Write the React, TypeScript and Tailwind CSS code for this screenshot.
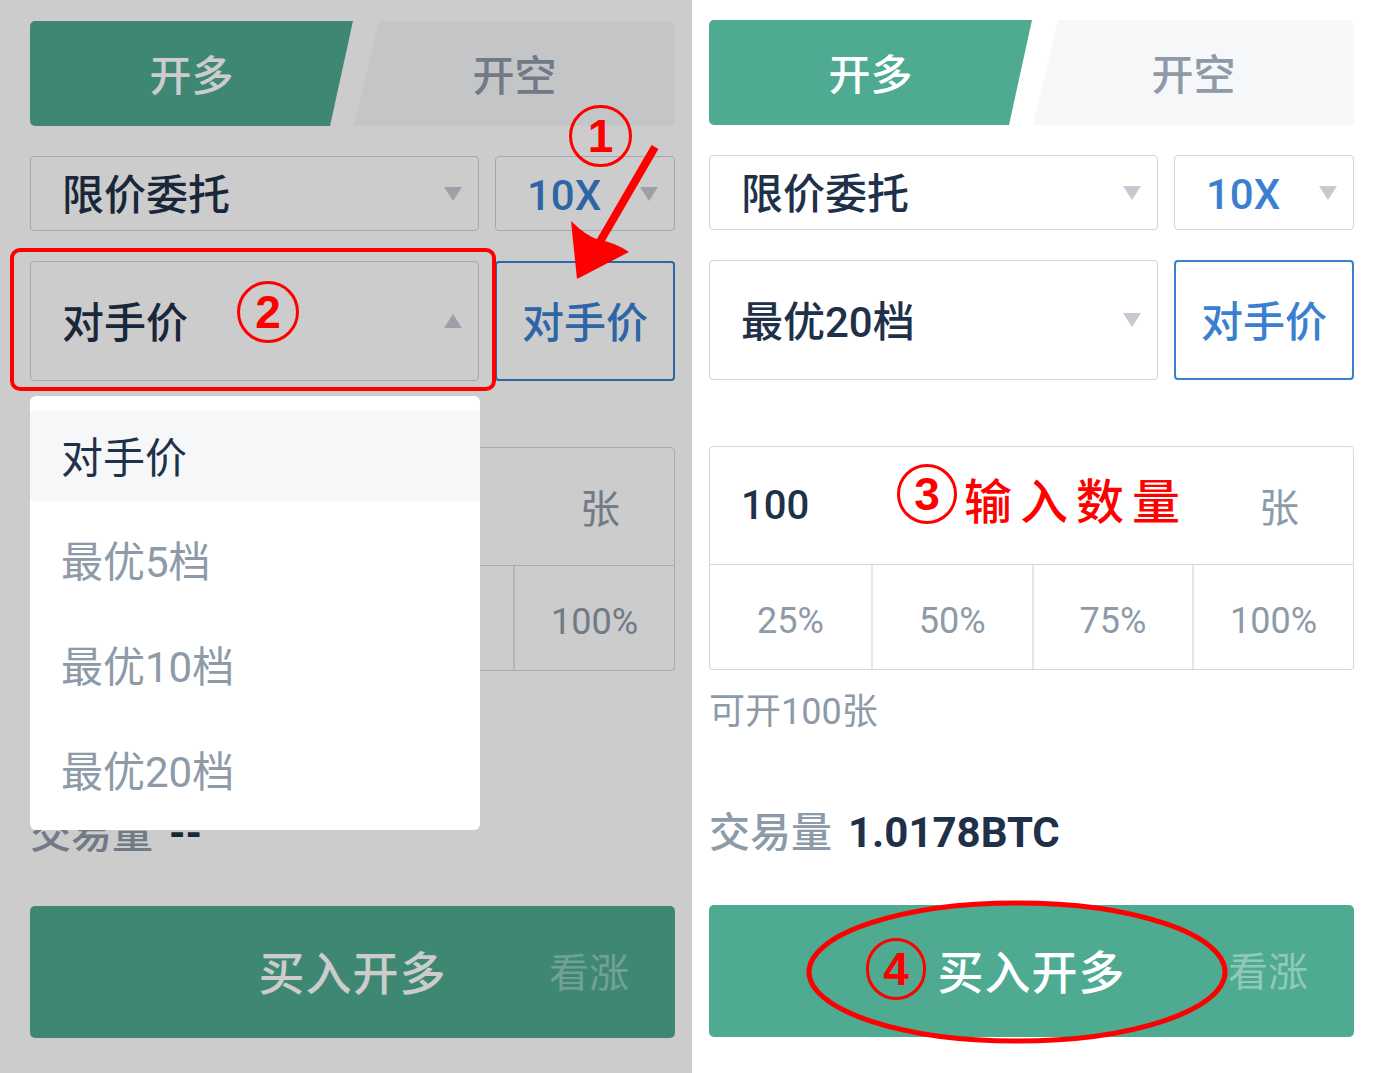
import type { ReactNode } from 'react';

const FONT = 'font-[Roboto,Noto_Sans_CJK_SC,sans-serif]';

function Tabs() {
  return (
    <div className="flex h-[105px]">
      <div className="flex w-[323px] items-center justify-center rounded-l-[5px] bg-[#4eaa90] pt-[6px] text-[42px] font-medium text-white [clip-path:polygon(0_0,100%_0,calc(100%_-_23px)_100%,0_100%)]">
        开多
      </div>
      <div className="ml-px flex flex-1 items-center justify-center rounded-r-[5px] bg-[#f6f7f9] pt-[6px] text-[42px] font-medium text-[#8e9aa9] [clip-path:polygon(25px_0,100%_0,100%_100%,0_100%)]">
        开空
      </div>
    </div>
  );
}

function Caret({ up }: { up?: boolean }) {
  return up ? (
    <span className="-mt-[4px] ml-auto mr-[16px] h-0 w-0 border-x-[9px] border-b-[14px] border-x-transparent border-b-[#c5cad1]" />
  ) : (
    <span className="-mt-[4px] ml-auto mr-[16px] h-0 w-0 border-x-[9px] border-t-[14px] border-x-transparent border-t-[#c5cad1]" />
  );
}

function SelectBox({ children, up, className }: { children: ReactNode; up?: boolean; className: string }) {
  return (
    <div className={`flex items-center rounded-[4px] border border-[#cfd4da] bg-white pl-[31px] pt-[4px] ${className}`}>
      {children}
      <Caret up={up} />
    </div>
  );
}

function TradeForm({ price, up, amount, volume }: { price: string; up?: boolean; amount: string; volume: string }) {
  return (
    <div className="flex flex-col">
      <Tabs />

      <div className="mt-[30px] flex h-[75px] gap-[16px]">
        <SelectBox className="flex-1 text-[42px] font-medium text-[#1f3149]">限价委托</SelectBox>
        <SelectBox className="w-[180px] text-[42px] font-medium text-[#3a7fd0]">10X</SelectBox>
      </div>

      <div className="mt-[30px] flex h-[120px] gap-[16px]">
        <SelectBox up={up} className="flex-1 text-[42px] font-medium text-[#1f3149]">
          {price}
        </SelectBox>
        <div className="flex w-[180px] items-center justify-center rounded-[4px] border-2 border-[#3a7fd0] bg-white pt-[4px] text-[42px] font-medium text-[#3a7fd0]">
          对手价
        </div>
      </div>

      <div className="mt-[66px] flex h-[119px] items-center rounded-t-[4px] border border-[#d3d7dc] bg-white pl-[31px] pr-[54px]">
        <span className="text-[40px] font-medium text-[#1f3149]">{amount}</span>
        <span className="ml-auto pt-[6px] text-[40px] text-[#8d9aa8]">张</span>
      </div>
      <div className="grid h-[105px] grid-cols-4 rounded-b-[4px] border-x border-b border-[#d3d7dc] bg-white pt-[8px] text-[36px] text-[#8d9aa8]">
        <div className="flex items-center justify-center">25%</div>
        <div className="-mt-[8px] flex items-center justify-center border-l-2 border-[#e3e6ea] pt-[8px]">50%</div>
        <div className="-mt-[8px] flex items-center justify-center border-l-2 border-[#e3e6ea] pt-[8px]">75%</div>
        <div className="-mt-[8px] flex items-center justify-center border-l-2 border-[#e3e6ea] pt-[8px]">100%</div>
      </div>

      <div className="mt-[20px] text-[36px] leading-[44px] text-[#8d9aa8]">可开100张</div>

      <div className="mt-[75px] flex items-center text-[41px] leading-[48px]">
        <span className="font-medium text-[#8d9aa8]">交易量</span>
        <span className="ml-[16px] text-[42px] font-bold text-[#1f3149]">{volume}</span>
      </div>

      <div className="relative mt-[48px] flex h-[132px] items-center justify-center rounded-[5px] bg-[#4eaa90] pt-[4px]">
        <span className="text-[46px] font-medium tracking-[1px] text-white">买入开多</span>
        <span className="absolute right-[46px] text-[40px] text-white/40">看涨</span>
      </div>
    </div>
  );
}

function Circled({ n, className }: { n: string; className: string }) {
  return (
    <div
      className={`absolute flex items-center justify-center rounded-full border-[3px] border-[#ff0000] font-[Liberation_Sans,Arial,sans-serif] text-[46px] font-bold leading-none text-[#ff0000] ${className}`}
    >
      {n}
    </div>
  );
}

export default function App() {
  return (
    <div className={`relative flex h-[1073px] w-[1376px] overflow-hidden bg-white ${FONT}`}>
      {/* left: dropdown open */}
      <div className="relative w-[692px] pl-[30px] pr-[17px] pt-[21px]">
        <TradeForm price="对手价" up amount="" volume="--" />
        <div className="absolute inset-0 bg-black/20" />

        <div className="absolute left-[30px] top-[396px] w-[450px] rounded-[6px] bg-white pb-[5px] pt-[15px] text-[42px]">
          <div className="flex h-[90px] items-center bg-[#f6f7f9] pl-[31px] pt-[4px] text-[#1f3149]">对手价</div>
          <div className="mt-[9px] flex h-[105px] items-center pl-[31px] text-[#8d9aa8]">最优5档</div>
          <div className="flex h-[105px] items-center pl-[31px] text-[#8d9aa8]">最优10档</div>
          <div className="flex h-[105px] items-center pl-[31px] text-[#8d9aa8]">最优20档</div>
        </div>
      </div>

      {/* right: filled form */}
      <div className="flex-1 pl-[17px] pr-[22px] pt-[20px]">
        <TradeForm price="最优20档" amount="100" volume="1.0178BTC" />
      </div>

      {/* annotations */}
      <div className="absolute left-[10px] top-[248px] h-[143px] w-[486px] rounded-[10px] border-4 border-[#ff0000]" />
      <Circled n="1" className="left-[569px] top-[105px] h-[62px] w-[63px]" />
      <Circled n="2" className="left-[237px] top-[281px] h-[62px] w-[62px]" />
      <Circled n="3" className="left-[897px] top-[464px] h-[60px] w-[60px]" />
      <Circled n="4" className="left-[866px] top-[938px] h-[62px] w-[60px] border-2" />
      <div className="absolute left-[964px] top-[468px] font-[Noto_Sans_CJK_SC,sans-serif] text-[48px] font-medium leading-[60px] tracking-[8px] text-[#ff0000]">
        输入数量
      </div>

      <svg className="pointer-events-none absolute inset-0" width="1376" height="1073" viewBox="0 0 1376 1073">
        <line x1="655" y1="147" x2="594" y2="252" stroke="#ff0000" strokeWidth="8" />
        <path d="M577 279 L571 221 Q586 236 599 240 Q614 242 629 252 Z" fill="#ff0000" />
        <ellipse cx="1017" cy="972" rx="208" ry="69" fill="none" stroke="#ff0000" strokeWidth="5" />
      </svg>
    </div>
  );
}
